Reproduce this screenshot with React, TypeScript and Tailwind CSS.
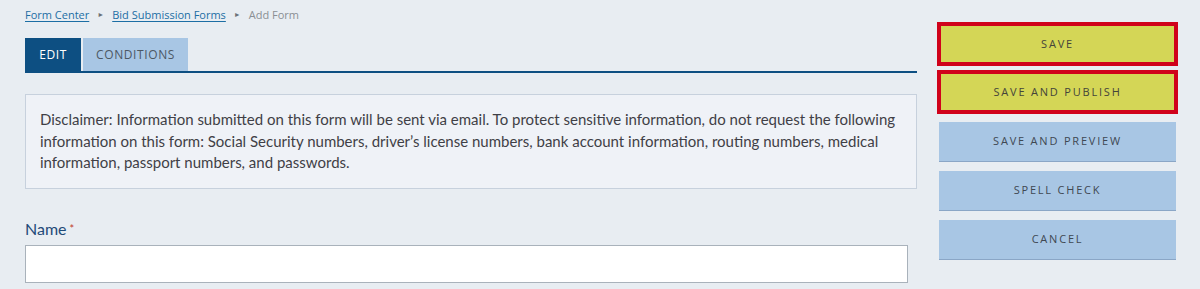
import React from 'react'

const crumbs = ['Form Center', 'Bid Submission Forms']

const actions = [
  { label: 'Save', primary: true, gap: 'mb-[8px]' },
  { label: 'Save and Publish', primary: true, gap: 'mb-[10px]' },
  { label: 'Save and Preview', primary: false, gap: 'mb-[9px]' },
  { label: 'Spell Check', primary: false, gap: 'mb-[9px]' },
  { label: 'Cancel', primary: false, gap: 'mb-[9px]' },
]

export default function App() {
  return (
    <div className="min-h-[289px] w-[1200px] bg-[#e8edf2] flex gap-[22px] pl-[25px] pr-[24px] font-['Open_Sans',sans-serif]">
      {/* Left: form */}
      <div className="w-[892px] shrink-0">
        <nav className="flex items-center h-[17px] mt-[7px] text-[11px] text-[#8a8f94]">
          {crumbs.map(c => (
            <React.Fragment key={c}>
              <a href="#" className="text-[#1c6ea4] underline underline-offset-2">{c}</a>
              <span className="text-[7px] text-[#6b7178] mx-[8px]">►</span>
            </React.Fragment>
          ))}
          <span>Add Form</span>
        </nav>

        {/* Tabs */}
        <div className="mt-[14px] flex gap-[2px] border-b-2 border-[#0d4f82]">
          <button className="h-[33px] w-[56px] bg-[#0d4f82] text-white text-[12px] tracking-[0.6px]">EDIT</button>
          <button className="h-[33px] w-[105px] bg-[#a8c6e4] text-[#4c5864] text-[12px] tracking-[0.6px]">CONDITIONS</button>
        </div>

        {/* Disclaimer */}
        <div className="mt-[21px] h-[95px] bg-[#eff2f7] border border-[#c7d1dd] px-[14px] pt-[14px] font-['Lato',sans-serif] text-[15px] leading-[21.5px] text-[#3f3f46]">
          Disclaimer: Information submitted on this form will be sent via email. To protect sensitive information, do not request the following information on this form: Social Security numbers, driver’s license numbers, bank account information, routing numbers, medical information, passport numbers, and passwords.
        </div>

        {/* Name field */}
        <label className="block mt-[30px] font-['Lato',sans-serif] text-[16px] leading-[20px] text-[#1f4a78]">
          Name<span className="ml-[3px] text-[11px] align-top text-[#c0392b]">*</span>
        </label>
        <input
          type="text"
          className="mt-[6px] block w-[883px] h-[38px] bg-white border border-[#a9b2bb] outline-none"
        />
      </div>

      {/* Right: actions */}
      <div className="w-[237px] shrink-0 pt-[24px] flex flex-col">
        {actions.map(a => (
          <button
            key={a.label}
            className={
              a.primary
                ? `h-10 ${a.gap} bg-[#d4d656] border-2 border-[#d0021b] outline-2 outline-[#d0021b] text-[11px] uppercase tracking-[1.8px] text-[#44443a]`
                : `h-10 ${a.gap} bg-[#a8c6e4] border-b border-[#8aa6c6] text-[11px] uppercase tracking-[1.8px] text-[#3f4852]`
            }
          >
            {a.label}
          </button>
        ))}
      </div>
    </div>
  )
}
